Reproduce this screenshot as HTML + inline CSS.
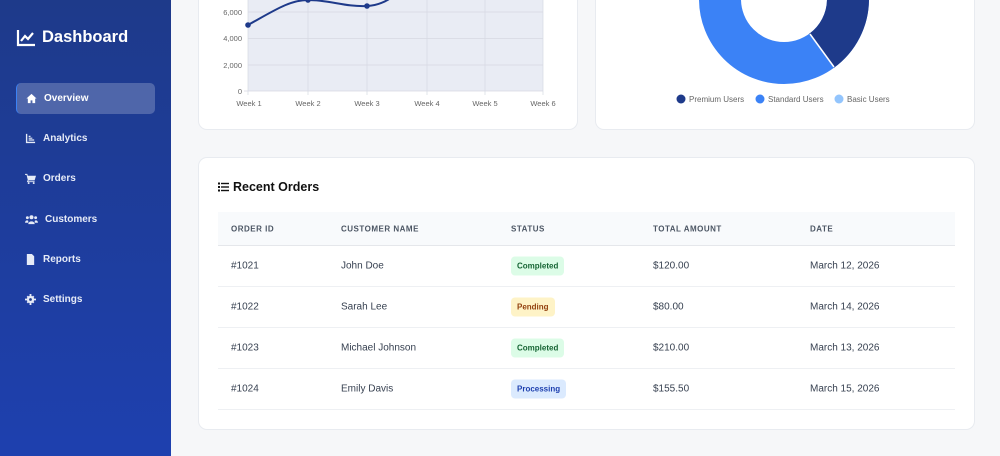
<!DOCTYPE html>
<html><head><meta charset="utf-8"><style>
*{box-sizing:border-box;margin:0;padding:0}
body{width:1000px;height:456px;overflow:hidden;background:#f6f7f9;font-family:"Liberation Sans",sans-serif;position:relative}
.side{position:absolute;left:0;top:0;width:171px;height:456px;background:linear-gradient(180deg,#1e3a8a,#1e40af)}
.logo{position:absolute;left:16px;top:28px;color:#fff;font-weight:bold;font-size:16.5px;display:flex;align-items:center;gap:6px}
.nav{position:absolute;left:16px;width:139px;height:31px;color:#e6ebf7;font-size:10px;font-weight:bold;display:flex;align-items:center;padding-left:9px;gap:7px}
.nav.act{background:rgba(255,255,255,.22);border-radius:5px;border-left:1.5px solid #3b82f6;color:#fff}
.nav svg{width:11px;height:11px;fill:#e6ebf7}
.card{position:absolute;background:#fff;border:1px solid #e8ebf0;border-radius:9px}
.tbl{position:absolute;left:218px;top:212px;width:737px}
.hd{height:34px;background:#f8fafc;border-bottom:1px solid #e5e7eb;position:relative;font-size:8px;font-weight:bold;color:#4b5563;letter-spacing:.5px}
.row{height:41px;border-bottom:1px solid #eef0f3;position:relative;font-size:10px;color:#374151}
.hd span,.row span{position:absolute;top:50%;transform:translateY(-50%)}
.b{font-size:8px;font-weight:bold;padding:5px 6px;border-radius:4px}
.c{background:#dcfce7;color:#166534}.p{background:#fef3c7;color:#92400e}.pr{background:#dbeafe;color:#1e40af}
</style></head><body>
<div class="side">
<div class="logo"><svg width="20" height="18" viewBox="0 0 20 18"><path d="M2 1V16H19" stroke="#fff" stroke-width="2.2" fill="none"/><path d="M5 12L9 7L12 10L17 4" stroke="#fff" stroke-width="2.2" fill="none"/></svg>Dashboard</div>
<div class="nav act" style="top:83px"><svg viewBox="0 0 12 12"><path d="M6 1L0.5 6H2V11H5V8H7V11H10V6H11.5Z" fill="#fff"/></svg>Overview</div>
<div class="nav" style="top:123px"><svg viewBox="0 0 12 12"><path d="M1 1H2.5V9.5H11V11H1ZM4 5H8V6.3H4ZM4 3H6V4.3H4ZM4 7H10V8.3H4Z"/></svg>Analytics</div>
<div class="nav" style="top:163px"><svg viewBox="0 0 12 12"><path d="M0 1H2.5L3 3H12L10.5 8H4L3.5 9H10.5V10H2L3 7.5L1.7 2H0Z"/><circle cx="4" cy="11" r="1"/><circle cx="9.5" cy="11" r="1"/></svg>Orders</div>
<div class="nav" style="top:204px"><svg viewBox="0 0 14 12" style="width:13px"><circle cx="7" cy="3.5" r="2.2"/><circle cx="2.5" cy="4" r="1.6"/><circle cx="11.5" cy="4" r="1.6"/><path d="M3.5 11C3.5 7 10.5 7 10.5 11ZM0 9.5C0 6.5 3.5 6.5 3.5 8V9.5ZM14 9.5C14 6.5 10.5 6.5 10.5 8V9.5Z"/></svg>Customers</div>
<div class="nav" style="top:244px"><svg viewBox="0 0 12 12"><path d="M2 0H7.5L10 2.5V12H2Z"/></svg>Reports</div>
<div class="nav" style="top:284px"><svg viewBox="0 0 12 12"><circle cx="6" cy="6" r="4" /><path d="M5 0H7V12H5ZM0 5H12V7H0ZM1.8 3.2L3.2 1.8L10.2 8.8L8.8 10.2ZM8.8 1.8L10.2 3.2L3.2 10.2L1.8 8.8Z"/><circle cx="6" cy="6" r="1.5" fill="#1e3a8a"/></svg>Settings</div>
</div>
<div class="card" style="left:198px;top:-10px;width:380px;height:140px"></div>
<div class="card" style="left:595px;top:-10px;width:380px;height:140px"></div>
<svg style="position:absolute;left:0;top:0" width="1000" height="130">
<rect x="248" y="0" width="295" height="91" fill="#e9ecf4"/>
<g stroke="#d6d9e2" stroke-width="0.7">
<line x1="248" y1="12" x2="543" y2="12"/><line x1="248" y1="38.5" x2="543" y2="38.5"/><line x1="248" y1="65" x2="543" y2="65"/><line x1="244" y1="91" x2="543" y2="91"/>
<line x1="248" y1="0" x2="248" y2="95"/><line x1="308" y1="0" x2="308" y2="95"/><line x1="367" y1="0" x2="367" y2="95"/><line x1="427" y1="0" x2="427" y2="95"/><line x1="485" y1="0" x2="485" y2="95"/><line x1="543" y1="0" x2="543" y2="95"/></g>
<path d="M248 25C275 10 290 0 308 0C330 0 345 7 367 6C385 5 395 -5 400 -10" stroke="#1e3a8a" stroke-width="2" fill="none"/>
<circle cx="248" cy="25" r="2.8" fill="#1e3a8a"/><circle cx="308" cy="0" r="2.8" fill="#1e3a8a"/><circle cx="367" cy="6" r="2.8" fill="#1e3a8a"/>
<g font-size="7.5" fill="#666" text-anchor="end"><text x="242" y="15">6,000</text><text x="242" y="41">4,000</text><text x="242" y="68">2,000</text><text x="242" y="94">0</text></g>
<g font-size="7.5" fill="#666" text-anchor="middle"><text x="249" y="106">Week 1</text><text x="308" y="106">Week 2</text><text x="367" y="106">Week 3</text><text x="427" y="106">Week 4</text><text x="485" y="106">Week 5</text><text x="543" y="106">Week 6</text></g>
<g transform="rotate(-90 784 -1)" fill="none" stroke-width="42">
<circle cx="784" cy="-1" r="64" stroke="#3b82f6"/>
<circle cx="784" cy="-1" r="64" stroke="#1e3a8a" stroke-dasharray="160.8 500"/>
<circle cx="784" cy="-1" r="64" stroke="#93c5fd" stroke-dasharray="0 379.8 22.3 100"/>
</g>
<line x1="810" y1="34" x2="834" y2="67" stroke="#fff" stroke-width="1.5"/>
<g font-size="8" fill="#666"><circle cx="681" cy="99" r="4.5" fill="#1e3a8a"/><text x="689" y="102">Premium Users</text>
<circle cx="760" cy="99" r="4.5" fill="#3b82f6"/><text x="768" y="102">Standard Users</text>
<circle cx="839" cy="99" r="4.5" fill="#93c5fd"/><text x="847" y="102">Basic Users</text></g>
</svg>
<div class="card" style="left:198px;top:157px;width:777px;height:273px"></div>
<div style="position:absolute;left:218px;top:180px;font-size:12.5px;font-weight:bold;color:#111;display:flex;align-items:center;gap:4px"><svg width="11" height="10" viewBox="0 0 11 10"><rect x="0" y="0.5" width="2" height="2" fill="#111"/><rect x="0" y="4" width="2" height="2" fill="#111"/><rect x="0" y="7.5" width="2" height="2" fill="#111"/><rect x="3" y="0.8" width="8" height="1.4" fill="#111"/><rect x="3" y="4.3" width="8" height="1.4" fill="#111"/><rect x="3" y="7.8" width="8" height="1.4" fill="#111"/></svg>Recent Orders</div>
<div class="tbl">
<div class="hd"><span style="left:13px">ORDER ID</span><span style="left:123px">CUSTOMER NAME</span><span style="left:293px">STATUS</span><span style="left:435px">TOTAL AMOUNT</span><span style="left:592px">DATE</span></div>
<div class="row"><span style="left:13px">#1021</span><span style="left:123px">John Doe</span><span style="left:293px" class="b c">Completed</span><span style="left:435px">$120.00</span><span style="left:592px">March 12, 2026</span></div>
<div class="row"><span style="left:13px">#1022</span><span style="left:123px">Sarah Lee</span><span style="left:293px" class="b p">Pending</span><span style="left:435px">$80.00</span><span style="left:592px">March 14, 2026</span></div>
<div class="row"><span style="left:13px">#1023</span><span style="left:123px">Michael Johnson</span><span style="left:293px" class="b c">Completed</span><span style="left:435px">$210.00</span><span style="left:592px">March 13, 2026</span></div>
<div class="row"><span style="left:13px">#1024</span><span style="left:123px">Emily Davis</span><span style="left:293px" class="b pr">Processing</span><span style="left:435px">$155.50</span><span style="left:592px">March 15, 2026</span></div>
</div>
</body></html>
